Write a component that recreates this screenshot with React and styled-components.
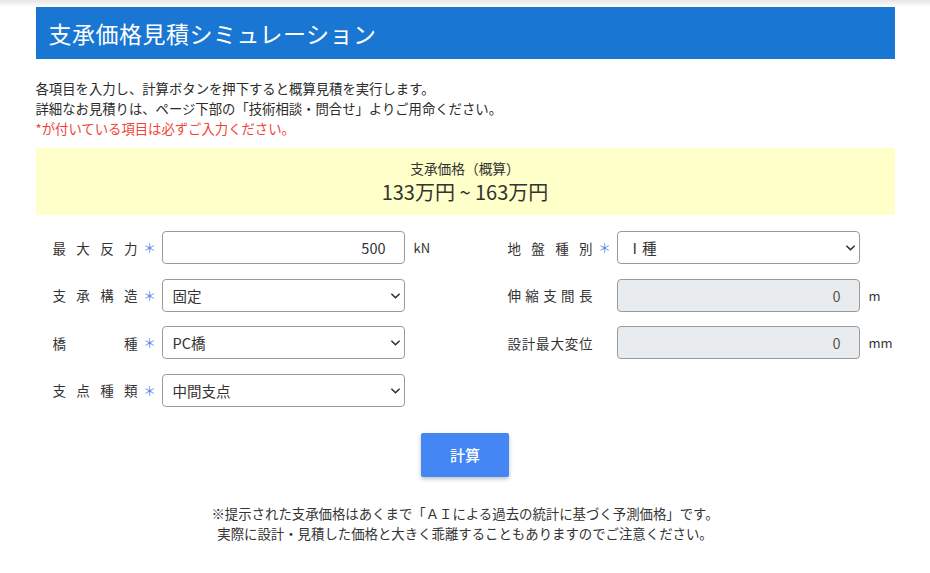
import React from 'react';
import styled, { createGlobalStyle } from 'styled-components';

const GlobalStyle = createGlobalStyle`
  html, body {
    margin: 0;
    padding: 0;
    background: #ffffff;
  }
  body {
    font-family: "Noto Sans CJK JP", "Noto Sans", sans-serif;
    color: #333333;
  }
`;

const leftFields = [
  { label: '最大反力', required: true, type: 'input', value: '500', unit: 'kN' },
  { label: '支承構造', required: true, type: 'select', value: '固定' },
  { label: '橋種', required: true, type: 'select', value: 'PC橋' },
  { label: '支点種類', required: true, type: 'select', value: '中間支点' },
];

const rightFields = [
  { label: '地盤種別', required: true, type: 'select', value: 'Ⅰ種' },
  { label: '伸縮支間長', required: false, type: 'disabled', value: '0', unit: 'm' },
  { label: '設計最大変位', required: false, type: 'disabled', value: '0', unit: 'mm' },
];

const Chevron = () => (
  <ChevronIcon viewBox="0 0 10 6" width="9" height="6">
    <path d="M1 1l4 4 4-4" fill="none" stroke="#333" strokeWidth="1.8" strokeLinecap="round" strokeLinejoin="round" />
  </ChevronIcon>
);

const Field = ({ field }) => (
  <Row>
    <Label>{field.label}</Label>
    <Star>{field.required ? '＊' : ''}</Star>
    {field.type === 'select' ? (
      <SelectWrap>
        <Select defaultValue={field.value}>
          <option>{field.value}</option>
        </Select>
        <Chevron />
      </SelectWrap>
    ) : (
      <NumberInput
        defaultValue={field.value}
        disabled={field.type === 'disabled'}
        $disabled={field.type === 'disabled'}
      />
    )}
    <Unit>{field.unit || ''}</Unit>
  </Row>
);

const App = () => {
  return (
    <>
      <GlobalStyle />
      <TopShade />
      <Page>
        <Header>支承価格見積シミュレーション</Header>
        <Intro>
          <p>各項目を入力し、計算ボタンを押下すると概算見積を実行します。</p>
          <p>詳細なお見積りは、ページ下部の「技術相談・問合せ」よりご用命ください。</p>
          <Warn>*が付いている項目は必ずご入力ください。</Warn>
        </Intro>
        <ResultBox>
          <ResultLabel>支承価格（概算）</ResultLabel>
          <ResultPrice>133万円 ~ 163万円</ResultPrice>
        </ResultBox>
        <FormGrid>
          <Column>
            {leftFields.map((f) => (
              <Field key={f.label} field={f} />
            ))}
          </Column>
          <Column>
            {rightFields.map((f) => (
              <Field key={f.label} field={f} />
            ))}
          </Column>
        </FormGrid>
        <ButtonRow>
          <CalcButton>計算</CalcButton>
        </ButtonRow>
        <Note>
          <p>※提示された支承価格はあくまで「ＡＩによる過去の統計に基づく予測価格」です。</p>
          <p>実際に設計・見積した価格と大きく乖離することもありますのでご注意ください。</p>
        </Note>
      </Page>
    </>
  );
};

const TopShade = styled.div`
  height: 7px;
  background: linear-gradient(to bottom, #e6e6e6, #ffffff);
`;

const Page = styled.div`
  width: 859px;
  margin: 0 auto;
`;

const Header = styled.h1`
  margin: 0;
  height: 52px;
  display: flex;
  align-items: center;
  padding: 0 13px;
  background: #1976d2;
  color: #ffffff;
  font-size: 23px;
  font-weight: 400;
  letter-spacing: 0.5px;
`;

const Intro = styled.div`
  padding-top: 20px;
  font-size: 13.35px;
  line-height: 20px;
  color: #2b2b2b;
  p {
    margin: 0;
  }
`;

const Warn = styled.p`
  color: #f0433a;
`;

const ResultBox = styled.div`
  margin-top: 9px;
  height: 67px;
  background: #ffffc9;
  display: flex;
  flex-direction: column;
  align-items: center;
  justify-content: center;
`;

const ResultLabel = styled.div`
  font-size: 13.7px;
  line-height: 19px;
  margin-bottom: 1px;
`;

const ResultPrice = styled.div`
  font-size: 20px;
  line-height: 25px;
`;

const FormGrid = styled.div`
  display: grid;
  grid-template-columns: 455px 1fr;
  padding: 16px 0 0 17px;
`;

const Column = styled.div`
  display: flex;
  flex-direction: column;
  gap: 14.6px;
`;

const Row = styled.div`
  display: flex;
  align-items: center;
  height: 33px;
`;

const Label = styled.span`
  width: 85px;
  font-size: 13.5px;
  text-align: justify;
  text-align-last: justify;
  color: #333;
`;

const Star = styled.span`
  width: 24px;
  text-align: center;
  color: #5a8de0;
  font-size: 13px;
`;

const fieldBox = `
  box-sizing: border-box;
  width: 243px;
  height: 33px;
  border: 1px solid #9a9a9a;
  border-radius: 4px;
  font-family: "Noto Sans CJK JP", "Noto Sans", sans-serif;
  font-size: 14.5px;
  color: #333;
  outline: none;
`;

const NumberInput = styled.input`
  ${fieldBox}
  text-align: right;
  padding: 0 18px 0 10px;
  background: ${(p) => (p.$disabled ? '#e9ecef' : '#ffffff')};
  color: ${(p) => (p.$disabled ? '#555' : '#333')};
  -webkit-text-fill-color: ${(p) => (p.$disabled ? '#555' : '#333')};
  opacity: 1;
`;

const SelectWrap = styled.div`
  position: relative;
  width: 243px;
  height: 33px;
`;

const Select = styled.select`
  ${fieldBox}
  appearance: none;
  background: #ffffff;
  padding: 0 24px 0 10px;
`;

const ChevronIcon = styled.svg`
  position: absolute;
  right: 5px;
  top: 14px;
  pointer-events: none;
`;

const Unit = styled.span`
  margin-left: 9px;
  font-size: 13px;
  color: #333;
`;

const ButtonRow = styled.div`
  display: flex;
  justify-content: center;
  padding-top: 26px;
`;

const CalcButton = styled.button`
  width: 88px;
  height: 44px;
  border: none;
  border-radius: 2px;
  background: #4386f4;
  color: #ffffff;
  font-family: "Noto Sans CJK JP", "Noto Sans", sans-serif;
  font-size: 15px;
  font-weight: 500;
  box-shadow: 0 2px 4px rgba(0, 0, 0, 0.25);
  cursor: pointer;
`;

const Note = styled.div`
  padding-top: 26px;
  text-align: center;
  font-size: 13.4px;
  line-height: 20px;
  p {
    margin: 0;
  }
`;

export default App;
